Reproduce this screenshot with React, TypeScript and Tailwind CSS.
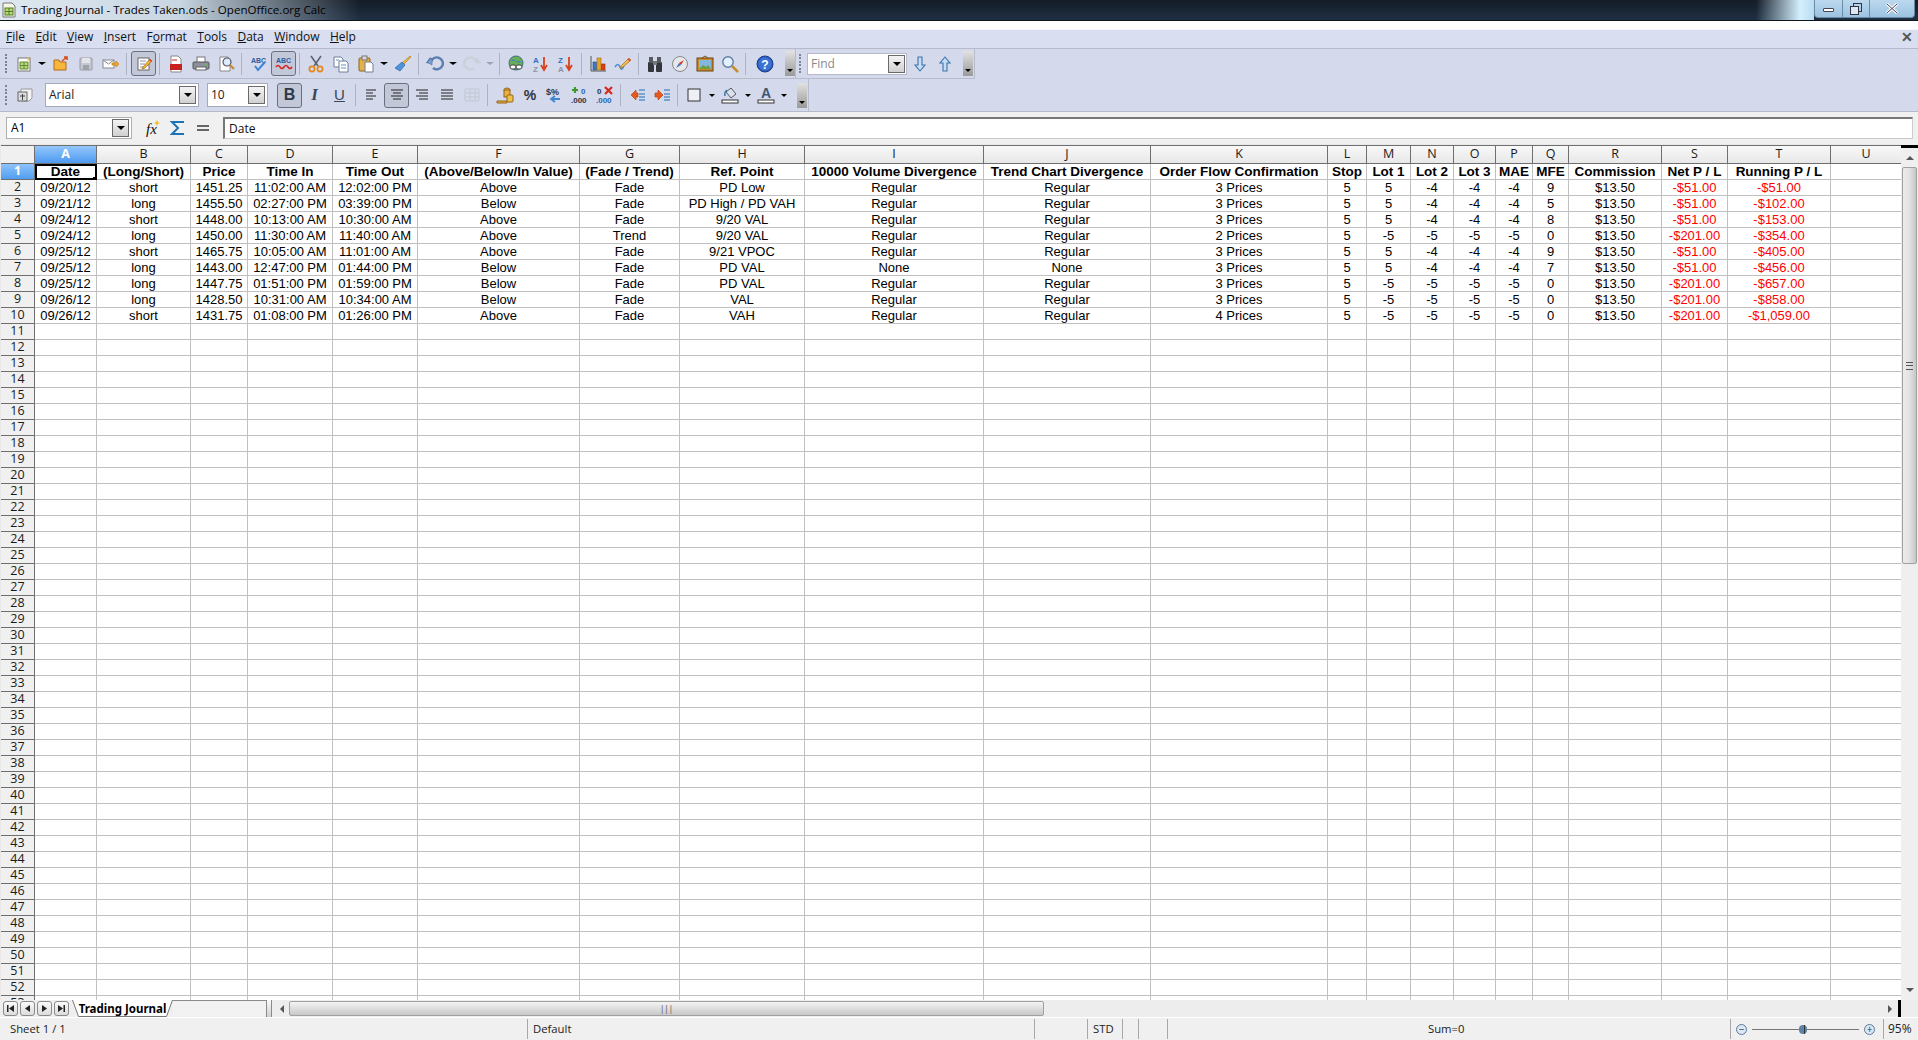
import React from "react";

const sans = "font-['Open_Sans','Noto_Sans',sans-serif]";

const columns = ["A", "B", "C", "D", "E", "F", "G", "H", "I", "J", "K", "L", "M", "N", "O", "P", "Q", "R", "S", "T", "U"];

const headers = ["Date", "(Long/Short)", "Price", "Time In", "Time Out", "(Above/Below/In Value)", "(Fade / Trend)", "Ref. Point", "10000 Volume Divergence", "Trend Chart Divergence", "Order Flow Confirmation", "Stop", "Lot 1", "Lot 2", "Lot 3", "MAE", "MFE", "Commission", "Net P / L", "Running P / L", ""];

const trades = [
  ["09/20/12", "short", "1451.25", "11:02:00 AM", "12:02:00 PM", "Above", "Fade", "PD Low", "Regular", "Regular", "3 Prices", "5", "5", "-4", "-4", "-4", "9", "$13.50", "-$51.00", "-$51.00", ""],
  ["09/21/12", "long", "1455.50", "02:27:00 PM", "03:39:00 PM", "Below", "Fade", "PD High / PD VAH", "Regular", "Regular", "3 Prices", "5", "5", "-4", "-4", "-4", "5", "$13.50", "-$51.00", "-$102.00", ""],
  ["09/24/12", "short", "1448.00", "10:13:00 AM", "10:30:00 AM", "Above", "Fade", "9/20 VAL", "Regular", "Regular", "3 Prices", "5", "5", "-4", "-4", "-4", "8", "$13.50", "-$51.00", "-$153.00", ""],
  ["09/24/12", "long", "1450.00", "11:30:00 AM", "11:40:00 AM", "Above", "Trend", "9/20 VAL", "Regular", "Regular", "2 Prices", "5", "-5", "-5", "-5", "-5", "0", "$13.50", "-$201.00", "-$354.00", ""],
  ["09/25/12", "short", "1465.75", "10:05:00 AM", "11:01:00 AM", "Above", "Fade", "9/21 VPOC", "Regular", "Regular", "3 Prices", "5", "5", "-4", "-4", "-4", "9", "$13.50", "-$51.00", "-$405.00", ""],
  ["09/25/12", "long", "1443.00", "12:47:00 PM", "01:44:00 PM", "Below", "Fade", "PD VAL", "None", "None", "3 Prices", "5", "5", "-4", "-4", "-4", "7", "$13.50", "-$51.00", "-$456.00", ""],
  ["09/25/12", "long", "1447.75", "01:51:00 PM", "01:59:00 PM", "Below", "Fade", "PD VAL", "Regular", "Regular", "3 Prices", "5", "-5", "-5", "-5", "-5", "0", "$13.50", "-$201.00", "-$657.00", ""],
  ["09/26/12", "long", "1428.50", "10:31:00 AM", "10:34:00 AM", "Below", "Fade", "VAL", "Regular", "Regular", "3 Prices", "5", "-5", "-5", "-5", "-5", "0", "$13.50", "-$201.00", "-$858.00", ""],
  ["09/26/12", "short", "1431.75", "01:08:00 PM", "01:26:00 PM", "Above", "Fade", "VAH", "Regular", "Regular", "4 Prices", "5", "-5", "-5", "-5", "-5", "0", "$13.50", "-$201.00", "-$1,059.00", ""],
];

const menus: [string, number][] = [["File", 0], ["Edit", 0], ["View", 0], ["Insert", 0], ["Format", 1], ["Tools", 0], ["Data", 0], ["Window", 0], ["Help", 0]];

const emptyRows = Array.from({ length: 43 }, (_, i) => i + 11);
const blankCells = columns.map(() => "");

function Sep() {
  return <span className="mx-[3px] h-[22px] w-px shrink-0 bg-[#aeb3c4]" />;
}

function Grip() {
  return (
    <span className="ml-[3px] mr-[2px] flex h-[22px] w-[3px] shrink-0 flex-col justify-between py-px">
      {[0, 1, 2, 3, 4, 5].map((i) => (
        <span key={i} className="h-[2px] w-[2px] bg-[#7d8296]" />
      ))}
    </span>
  );
}

function Btn({ children, active }: { children: React.ReactNode; active?: boolean }) {
  return (
    <span
      className={`flex h-[25px] w-[25px] shrink-0 items-center justify-center rounded-[3px] ${
        active ? "border border-[#6b7080] bg-[#c3c8d8]" : ""
      }`}
    >
      <svg width="18" height="18" viewBox="0 0 18 18">
        {children}
      </svg>
    </span>
  );
}

function Drop() {
  return (
    <span className="flex w-[12px] shrink-0 justify-center">
      <span className="h-0 w-0 border-x-[4px] border-t-[3px] border-x-transparent border-t-black" />
    </span>
  );
}

function SmallDrop() {
  return (
    <span className="flex w-[11px] shrink-0 justify-center">
      <span className="h-0 w-0 border-x-[3px] border-t-[3px] border-x-transparent border-t-black" />
    </span>
  );
}

function Overflow() {
  return (
    <span className="flex h-[25px] w-[10px] shrink-0 items-end justify-center bg-gradient-to-b from-[#e2e2e2] to-[#9a9a9a] pb-[4px]">
      <span className="h-0 w-0 border-x-[3px] border-t-[3px] border-x-transparent border-t-black" />
    </span>
  );
}

function ComboArrow() {
  return (
    <span className="flex h-[18px] w-[17px] items-center justify-center border border-[#6a6a6a] bg-gradient-to-b from-[#f4f4f4] to-[#d0d0d0]">
      <span className="h-0 w-0 border-x-[4px] border-t-[4px] border-x-transparent border-t-black" />
    </span>
  );
}

const align = ["M3 4h10M3 7h7M3 10h10M3 13h7", "M3 4h12M5 7h8M3 10h12M5 13h8", "M3 4h12M6 7h9M3 10h12M6 13h9", "M3 4h12M3 7h12M3 10h12M3 13h12"];

function Toolbar1() {
  return (
    <div className="flex h-[30px] w-[796px] shrink-0 items-center border-b border-r border-[#b7bccd] pl-[2px]">
      <Grip />
      <span className="w-px" />
      <Btn><rect x="3" y="3" width="12" height="13" fill="#fff" stroke="#777" /><path d="M5 7h8v7H5z" fill="#b8d67a" stroke="#5f8a2b" /><path d="M9 7v7M5 10.5h8" stroke="#5f8a2b" /><path d="M11 1l1 2 2-1-1 2 2 1-2 1" fill="#f2c230" /></Btn>
      <Drop />
      <Btn><path d="M2 5h5l1 2h6v8H2z" fill="#f6b73c" stroke="#b46a12" /><path d="M10 6l5-4M12 2h3v3" stroke="#d84b16" strokeWidth="1.6" fill="none" /></Btn>
      <Btn><rect x="3" y="3" width="12" height="12" rx="1" fill="#c5c8cf" stroke="#9a9ca4" /><rect x="5" y="3" width="8" height="5" fill="#e4e5ea" /><rect x="6" y="10" width="6" height="5" fill="#9fa2aa" /></Btn>
      <Btn><rect x="1" y="5" width="11" height="8" fill="#fff" stroke="#888" /><path d="M1 5l5.5 4L12 5" fill="none" stroke="#888" /><path d="M10 8h4V6l3 3-3 3v-2h-4z" fill="#efaa2a" stroke="#b67714" strokeWidth=".6" /></Btn>
      <Sep />
      <span className="w-px" />
      <Btn active><rect x="3" y="3" width="11" height="12" fill="#fff" stroke="#666" /><path d="M5 6h6M5 9h5M5 12h4" stroke="#8a8fa0" /><path d="M8 12l7-8 2 2-7 7-3 1z" fill="#f0b23a" stroke="#a5661a" strokeWidth=".7" /><path d="M14.5 4.5l2 2" stroke="#d8432a" strokeWidth="1.5" /></Btn>
      <Sep />
      <Btn><path d="M4 1h7l3 3v13H4z" fill="#fff" stroke="#888" /><rect x="3" y="9" width="12" height="6" fill="#c8201e" /><path d="M5 5h5" stroke="#c8201e" /></Btn>
      <Btn><rect x="5" y="2" width="8" height="6" fill="#fff" stroke="#777" /><rect x="1" y="7" width="16" height="7" rx="1" fill="#8c909a" stroke="#555" /><rect x="4" y="12" width="10" height="3" fill="#fff" stroke="#666" /><circle cx="14" cy="10" r=".9" fill="#6ec04a" /></Btn>
      <Btn><path d="M3 2h8l2 3v11H3z" fill="#fff" stroke="#888" /><circle cx="10" cy="7" r="4" fill="#dcecff" stroke="#556" strokeWidth="1.2" /><path d="M13 10l4 4" stroke="#c68a2c" strokeWidth="2.2" /></Btn>
      <Sep />
      <span className="w-px" />
      <Btn><text x="1" y="8" fontSize="7" fontWeight="700" fontFamily="Liberation Sans" fill="#2c5aa0">ABC</text><path d="M5 11l3 4 7-8" fill="none" stroke="#3d86d6" strokeWidth="2" /></Btn>
      <Btn active><text x="1" y="8" fontSize="7" fontWeight="700" fontFamily="Liberation Sans" fill="#2c5aa0">ABC</text><path d="M1 12q2-3 4 0t4 0 4 0 4 0" fill="none" stroke="#d32a2a" strokeWidth="1.6" /></Btn>
      <Sep />
      <Btn><path d="M4 1l7 10M14 1L7 11" stroke="#5c6470" strokeWidth="1.6" /><circle cx="5" cy="14" r="2.6" fill="none" stroke="#e4881c" strokeWidth="1.7" /><circle cx="13" cy="14" r="2.6" fill="none" stroke="#e4881c" strokeWidth="1.7" /></Btn>
      <Btn><path d="M2 2h7l2 2v8H2z" fill="#fff" stroke="#6a7f9a" /><path d="M7 6h7l2 2v9H7z" fill="#fff" stroke="#6a7f9a" /><path d="M9 10h5M9 13h5M4 5h3" stroke="#6a8fb8" /></Btn>
      <Btn><rect x="2" y="3" width="11" height="13" rx="1" fill="#e3b04a" stroke="#8e661c" /><rect x="5" y="1" width="5" height="4" fill="#d9d9d9" stroke="#777" /><path d="M8 7h6l2 2v8H8z" fill="#fff" stroke="#6a7f9a" /></Btn>
      <Drop />
      <span className="-ml-[6px] w-[6px]" />
      <Btn><path d="M16 1l1 1-7 7-2-1z" fill="#f1b73d" stroke="#a5741c" strokeWidth=".6" /><path d="M8 7l3 3-5 6-5-3z" fill="#4f93dc" stroke="#2e6aa8" strokeWidth=".7" /></Btn>
      <Sep />
      <Btn><path d="M5 3L2 7h3a6 6 0 1 1 2 6" fill="none" stroke="#5c7fb0" strokeWidth="2.4" /><path d="M1 7l5-4v7z" fill="#7fa2d0" stroke="#446a9d" strokeWidth=".6" /></Btn>
      <Drop />
      <Btn><path d="M13 3l3 4h-3a6 6 0 1 0-2 6" fill="none" stroke="#ccd0da" strokeWidth="2.4" /></Btn>
      <span className="flex w-[12px] shrink-0 justify-center">
        <span className="h-0 w-0 border-x-[4px] border-t-[3px] border-x-transparent border-t-[#a0a4b0]" />
      </span>
      <Sep />
      <Btn><circle cx="9" cy="8" r="7" fill="#6cae55" stroke="#3f6e8a" /><path d="M3 6q4-3 6 0t6 0" fill="#3f87c4" /><rect x="3" y="10" width="6" height="4" rx="2" fill="#fff" stroke="#444" /><rect x="9" y="10" width="6" height="4" rx="2" fill="#fff" stroke="#444" /></Btn>
      <Btn><text x="1" y="8" fontSize="8" fontWeight="700" fontFamily="Liberation Sans" fill="#2c73c8">A</text><text x="1" y="17" fontSize="8" fontWeight="700" fontFamily="Liberation Sans" fill="#8b93a3">Z</text><path d="M12 2v11M9 10l3 5 3-5" stroke="#d8431c" strokeWidth="1.8" fill="none" /></Btn>
      <Btn><text x="1" y="8" fontSize="8" fontWeight="700" fontFamily="Liberation Sans" fill="#2c73c8">Z</text><text x="1" y="17" fontSize="8" fontWeight="700" fontFamily="Liberation Sans" fill="#8b93a3">A</text><path d="M12 2v11M9 10l3 5 3-5" stroke="#d8431c" strokeWidth="1.8" fill="none" /></Btn>
      <Sep />
      <Btn><path d="M2 1v15h15" fill="none" stroke="#555" /><rect x="4" y="7" width="3.5" height="8" fill="#3b78c4" stroke="#224d88" strokeWidth=".6" /><rect x="8" y="3" width="4" height="12" fill="#e8a52e" stroke="#a06a12" strokeWidth=".6" /><rect x="12.5" y="9" width="3.5" height="6" fill="#d8431c" stroke="#94280c" strokeWidth=".6" /></Btn>
      <Btn><path d="M1 12q3-5 5 0t4-2" fill="none" stroke="#4c8ed6" strokeWidth="1.6" /><path d="M7 11l8-8 2 2-8 7-3 1z" fill="#f2bd4a" stroke="#a36c18" strokeWidth=".7" /><path d="M14 4l2 2" stroke="#d8432a" strokeWidth="1.6" /></Btn>
      <Sep />
      <Btn><rect x="2" y="7" width="6" height="10" rx="1" fill="#33373d" /><rect x="10" y="7" width="6" height="10" rx="1" fill="#33373d" /><rect x="3" y="2" width="4" height="6" fill="#555a62" /><rect x="11" y="2" width="4" height="6" fill="#555a62" /><rect x="7" y="6" width="4" height="4" fill="#777" /></Btn>
      <Btn><circle cx="9" cy="9" r="7.5" fill="#e8e8ea" stroke="#888" /><path d="M13 5l-3 5-2-2z" fill="#d8352a" /><path d="M5 13l3-5 2 2z" fill="#3e78c8" /></Btn>
      <Btn><path d="M6 3l3-2 3 2" fill="none" stroke="#7a5518" /><rect x="1" y="3" width="16" height="13" fill="#c98a2a" stroke="#6a4510" /><rect x="3" y="5" width="12" height="9" fill="#84b7de" /><path d="M3 14l4-4 3 2 2-2 3 4z" fill="#6d9e3f" /></Btn>
      <Btn><circle cx="7" cy="7" r="5.2" fill="#e2f0ff" stroke="#5e7fa6" strokeWidth="1.4" /><path d="M11 11l6 6" stroke="#c88f2e" strokeWidth="2.6" /></Btn>
      <Sep />
      <span className="w-[3px]" />
      <Btn><circle cx="9" cy="9" r="8" fill="#2f5fc0" stroke="#1d3c88" /><circle cx="9" cy="9" r="6.5" fill="#3c72d6" /><text x="9" y="13.5" textAnchor="middle" fontSize="12" fontWeight="700" fontFamily="Liberation Sans" fill="#fff">?</text></Btn>
      <span className="w-[8px]" />
      <Overflow />
    </div>
  );
}

function FindBar() {
  return (
    <div className="flex h-[30px] w-[179px] shrink-0 items-center border-b border-r border-[#b7bccd]">
      <Grip />
      <div className="ml-[3px] flex h-[22px] w-[100px] items-center justify-between border border-[#b6bac8] bg-white pl-[3px] pr-px">
        <span className={`${sans} text-[12px] text-[#8a8a8a]`}>Find</span>
        <ComboArrow />
      </div>
      <Btn><path d="M7 2h4v8h3l-5 6-5-6h3z" fill="#c4dcf4" stroke="#3e72ac" strokeWidth="1.1" /></Btn>
      <Btn><path d="M7 16h4V8h3L9 2 4 8h3z" fill="#c4dcf4" stroke="#3e72ac" strokeWidth="1.1" /></Btn>
      <span className="w-[6px]" />
      <Overflow />
    </div>
  );
}

function Toolbar2() {
  return (
    <div className="flex h-[32px] w-[809px] shrink-0 items-center border-r border-[#b7bccd] pl-[2px]">
      <Grip />
      <span className="w-[2px]" />
      <Btn><path d="M5 3h11v9l-3 3H5z" fill="#f4f4f4" stroke="#999" /><rect x="2" y="6" width="9" height="9" fill="#dcdcdc" stroke="#666" /><path d="M6.5 8v6M4 10h5" stroke="#444" /></Btn>
      <span className="w-[8px]" />
      <div className="flex h-[24px] w-[154px] items-center justify-between border border-[#a5a9b8] bg-white pl-[3px] pr-[2px]">
        <span className={`${sans} text-[12px] text-[#222]`}>Arial</span>
        <ComboArrow />
      </div>
      <span className="w-[8px]" />
      <div className="flex h-[24px] w-[61px] items-center justify-between border border-[#a5a9b8] bg-white pl-[3px] pr-[2px]">
        <span className={`${sans} text-[12px] text-[#222]`}>10</span>
        <ComboArrow />
      </div>
      <span className="w-[9px]" />
      <span className="flex h-[25px] w-[25px] shrink-0 items-center justify-center rounded-[3px] border border-[#6b7080] bg-[#c3c8d8] font-['Liberation_Sans',sans-serif] text-[16px] font-bold text-[#2c3a4c]">B</span>
      <span className="flex h-[25px] w-[25px] shrink-0 items-center justify-center font-['Liberation_Serif',serif] text-[17px] font-bold italic text-[#3b4656]">I</span>
      <span className="flex h-[25px] w-[25px] shrink-0 items-center justify-center font-['Liberation_Sans',sans-serif] text-[15px] text-[#3b4656] underline">U</span>
      <Sep />
      <Btn><path d={align[0]} stroke="#222" /></Btn>
      <Btn active><path d={align[1]} stroke="#222" /></Btn>
      <Btn><path d={align[2]} stroke="#222" /></Btn>
      <Btn><path d={align[3]} stroke="#222" /></Btn>
      <Btn><path d="M2 3h14v12H2zM2 7h14M2 11h14M7 3v12M12 3v12" fill="none" stroke="#c3c7d3" /></Btn>
      <Sep />
      <span className="w-px" />
      <Btn><ellipse cx="11" cy="4" rx="3" ry="2" fill="#eab23c" stroke="#96651a" /><rect x="8" y="4" width="6" height="7" fill="#eab23c" stroke="#96651a" /><rect x="11" y="9" width="6" height="7" rx="1" fill="#f0c048" stroke="#96651a" /><path d="M1 15h10v2H1z" fill="#eab23c" stroke="#96651a" /></Btn>
      <Btn><text x="9" y="14" textAnchor="middle" fontSize="14" fontWeight="700" fontFamily="Liberation Sans" fill="#30343c">%</text></Btn>
      <Btn><text x="0" y="9" fontSize="9" fontWeight="700" fontFamily="Liberation Sans" fill="#30343c">$%</text><path d="M14 13H6M9 10l-4 3 4 3" stroke="#3e86d0" strokeWidth="1.8" fill="none" /></Btn>
      <Btn><path d="M4 1v6M1 4h6" stroke="#3d9a2a" strokeWidth="2.2" /><text x="10" y="8" fontSize="8" fontWeight="700" fontFamily="Liberation Sans" fill="#2c66b4">0</text><text x="0" y="17" fontSize="8" fontWeight="700" fontFamily="Liberation Sans" fill="#30343c">.000</text></Btn>
      <Btn><path d="M9 1l7 7M16 1L9 8" stroke="#d8281c" strokeWidth="2.2" /><text x="1" y="8" fontSize="8" fontWeight="700" fontFamily="Liberation Sans" fill="#30343c">0</text><text x="0" y="17" fontSize="8" fontWeight="700" fontFamily="Liberation Sans" fill="#2c66b4">.000</text></Btn>
      <Sep />
      <Btn><path d="M8 4l-5 5 5 5V11h2V7H8z" fill="#e8581c" stroke="#b03a0c" strokeWidth=".6" /><path d="M11 4h6M11 8h6M11 11h6M11 14h6" stroke="#1f6fb4" strokeWidth="1.2" /></Btn>
      <Btn><path d="M5 4l5 5-5 5V11H2V7h3z" fill="#e8581c" stroke="#b03a0c" strokeWidth=".6" /><path d="M11 4h6M11 8h6M11 11h6M11 14h6" stroke="#1f6fb4" strokeWidth="1.2" /></Btn>
      <Sep />
      <Btn><rect x="3" y="3" width="12" height="12" fill="#eef0f6" stroke="#333" /></Btn>
      <SmallDrop />
      <Btn><path d="M5 6l5-4 5 6-5 4z" fill="#d9e2ea" stroke="#556" /><path d="M6 4q-3 2-2 6" fill="none" stroke="#3b78b8" strokeWidth="1.5" /><rect x="1" y="14" width="16" height="3" fill="#fff" stroke="#333" /></Btn>
      <SmallDrop />
      <Btn><text x="9" y="12" textAnchor="middle" fontSize="14" fontWeight="700" fontFamily="Liberation Sans" fill="#3f5872">A</text><rect x="1" y="14" width="16" height="3" fill="#fff" stroke="#333" /></Btn>
      <SmallDrop />
      <span className="w-[8px]" />
      <Overflow />
    </div>
  );
}

function Cell({ text, bold, red, selected }: { text: string; bold?: boolean; red?: boolean; selected?: boolean }) {
  return (
    <div
      className={`relative flex items-center justify-center overflow-visible whitespace-nowrap border-b border-r border-[#c0c0c0] bg-white leading-none ${
        bold ? "text-[13.5px] font-bold" : "text-[13px]"
      } ${red ? "text-[#ff0000]" : "text-black"}`}
    >
      {text}
      {selected && (
        <>
          <span className="absolute -bottom-[2px] left-0 -right-[2px] top-0 border-b-[3px] border-l-2 border-r-[3px] border-t-2 border-black" />
          <span className="absolute -bottom-[4px] -right-[4px] h-[6px] w-[7px] bg-black" />
        </>
      )}
    </div>
  );
}

function RowHead({ n, active }: { n: number; active?: boolean }) {
  return (
    <div
      className={`${sans} flex items-center justify-center border-b border-r border-[#6f6f6f] text-[12.5px] leading-none ${
        active ? "bg-gradient-to-b from-[#8fc3fb] to-[#4f9df0] font-bold text-white" : "bg-[#f0f0f0] text-[#1a1a1a]"
      }`}
    >
      {n}
    </div>
  );
}

function Sheet() {
  return (
    <div className="relative min-h-0 flex-1 overflow-hidden bg-[#e8e8e8] pl-px pt-px">
      <div className="grid grid-cols-[34px_62px_94px_57px_85px_85px_162px_100px_125px_179px_167px_177px_39px_44px_43px_42px_37px_36px_93px_66px_103px_71px] grid-rows-[19px] auto-rows-[16px] font-['Liberation_Sans','Arial',sans-serif]">
        <div className="border-b border-r border-t border-[#6f6f6f] bg-[#f0f0f0]" />
        {columns.map((c, i) => (
          <div
            key={c}
            className={`${sans} flex items-center justify-center border-b border-r border-t border-[#6f6f6f] text-[12.5px] leading-none ${
              i === 0 ? "bg-gradient-to-b from-[#93c6fc] to-[#4c9af0] font-bold text-white" : "bg-gradient-to-b from-[#f8f8f8] to-[#e8e8e8] text-[#1a1a1a]"
            }`}
          >
            {c}
          </div>
        ))}
        <RowHead n={1} active />
        {headers.map((h, i) => (
          <Cell key={i} text={h} bold selected={i === 0} />
        ))}
        {trades.map((row, r) => (
          <React.Fragment key={r}>
            <RowHead n={r + 2} />
            {row.map((v, i) => (
              <Cell key={i} text={v} red={i === 18 || i === 19} />
            ))}
          </React.Fragment>
        ))}
        {emptyRows.map((n) => (
          <React.Fragment key={n}>
            <RowHead n={n} />
            {blankCells.map((v, i) => (
              <Cell key={i} text={v} />
            ))}
          </React.Fragment>
        ))}
      </div>
    </div>
  );
}

function NavBtn({ path }: { path: string }) {
  return (
    <span className="flex h-[15px] w-[15px] shrink-0 items-center justify-center rounded-[3px] border border-[#8a8a8a] bg-gradient-to-b from-[#fafafa] to-[#dcdcdc]">
      <svg width="9" height="9" viewBox="0 0 9 9">
        <path d={path} fill="#222" />
      </svg>
    </span>
  );
}

function TabBar() {
  return (
    <div className="flex h-[17px] shrink-0 items-center bg-[#efefef] pl-[3px]">
      <div className="flex gap-[2px]">
        <NavBtn path="M1 1h1.5v7H1zM8 1v7L3 4.5z" />
        <NavBtn path="M7 1v7L2 4.5z" />
        <NavBtn path="M2 1v7l5-3.5z" />
        <NavBtn path="M8 1H6.5v7H8zM1 1v7l5-3.5z" />
      </div>
      <div className="ml-[3px] flex h-[17px] w-[194px] items-start">
        <span className="relative flex h-[17px] w-[101px] shrink-0 items-center justify-center">
          <svg className="absolute inset-0" width="101" height="17" viewBox="0 0 101 17">
            <path d="M.5 0l6 16.5h88l6-16.5" fill="#fff" stroke="#777" />
          </svg>
          <span className="relative font-['Noto_Sans',sans-serif] text-[11.5px] font-bold leading-none text-black">Trading Journal</span>
        </span>
        <span className="h-[16px] flex-1 border-t border-[#8a8a8a] bg-[#f2f2f2]" />
      </div>
      <span className="h-[17px] w-[6px] shrink-0 border-x border-[#8a8a8a] bg-gradient-to-b from-[#fafafa] to-[#d0d0d0]" />
      <div className="flex h-[17px] flex-1 items-center bg-[#ededed]">
        <span className="ml-[4px] flex w-[11px] justify-center">
          <span className="h-0 w-0 border-y-[4px] border-r-[4px] border-y-transparent border-r-[#555]" />
        </span>
        <span className="ml-[2px] flex h-[15px] w-[755px] items-center justify-center rounded-[2px] border border-[#a0a0a0] bg-gradient-to-b from-[#f4f4f4] to-[#c8c8c8] text-[8px] leading-none text-[#555]">
          |||
        </span>
        <span className="flex-1" />
        <span className="h-0 w-0 border-y-[4px] border-l-[4px] border-y-transparent border-l-[#555]" />
        <span className="ml-[6px] h-[17px] w-[3px] bg-black" />
        <span className="w-[17px]" />
      </div>
    </div>
  );
}

function VScroll() {
  return (
    <div className="flex w-[17px] shrink-0 flex-col items-center bg-[#efefef]">
      <span className="h-px w-full shrink-0" />
      <span className="h-[3px] w-full shrink-0 bg-black" />
      <span className="flex h-[19px] w-full shrink-0 items-center justify-center">
        <span className="h-0 w-0 border-x-[4px] border-b-[4px] border-x-transparent border-b-[#555]" />
      </span>
      <span className="flex h-[397px] w-[15px] shrink-0 items-center justify-center rounded-[2px] border border-[#a0a0a0] bg-gradient-to-r from-[#ececec] via-[#e2e2e2] to-[#c6c6c6]">
        <span className="flex h-[8px] w-[7px] flex-col justify-between">
          <span className="h-px w-full bg-[#555]" />
          <span className="h-px w-full bg-[#555]" />
          <span className="h-px w-full bg-[#555]" />
        </span>
      </span>
      <span className="flex-1" />
      <span className="flex h-[20px] w-full shrink-0 items-center justify-center">
        <span className="h-0 w-0 border-x-[4px] border-t-[4px] border-x-transparent border-t-[#555]" />
      </span>
    </div>
  );
}

function StatusBar() {
  const line = "h-[20px] w-px shrink-0 bg-[#a8a8a8]";
  return (
    <div className={`${sans} flex h-[23px] shrink-0 items-center border-t border-white bg-[#f0f0f0] text-[11.3px] leading-none text-[#222]`}>
      <span className="w-[527px] pl-[10px]">Sheet 1 / 1</span>
      <span className={line} />
      <span className="w-[506px] pl-[5px]">Default</span>
      <span className={line} />
      <span className="w-[52px]" />
      <span className={line} />
      <span className="w-[34px] pl-[5px]">STD</span>
      <span className={line} />
      <span className="w-[15px]" />
      <span className={line} />
      <span className="w-[28px]" />
      <span className={line} />
      <span className="w-[562px] pl-[260px]">Sum=0</span>
      <span className={line} />
      <span className="ml-[5px] flex h-[11px] w-[11px] items-center justify-center rounded-full border border-[#5d7a98] bg-[#dbe7f3] text-[10px] leading-none text-[#1d3f66]">−</span>
      <span className="relative mx-[5px] flex h-[11px] w-[107px] items-center">
        <span className="h-px w-full bg-[#777]" />
        <span className="absolute left-[47px] h-[9px] w-[8px] rounded-full bg-[#5f84a8]" />
        <span className="absolute left-[52px] h-[9px] w-px bg-[#333]" />
      </span>
      <span className="flex h-[11px] w-[11px] items-center justify-center rounded-full border border-[#5d7a98] bg-[#dbe7f3] text-[10px] leading-none text-[#1d3f66]">+</span>
      <span className="w-[8px]" />
      <span className={line} />
      <span className="pl-[4px] text-[12px]">95%</span>
    </div>
  );
}

export default function App() {
  return (
    <div className="flex h-[1040px] w-[1918px] flex-col overflow-hidden bg-[#f0f0f0]">
      {/* window title */}
      <div className="flex h-[21px] shrink-0 items-center justify-between border-b border-[#0f141a] bg-gradient-to-b from-[#141c26] to-[#1f3044]">
        <div className="flex h-full w-[360px] items-center bg-gradient-to-r from-[#dfe8f0] via-[#c8d6e2] to-transparent pl-[2px]">
          <svg width="14" height="16" viewBox="0 0 14 16">
            <path d="M1 1h9l3 3v11H1z" fill="#f6f6e8" stroke="#777" />
            <rect x="3" y="6" width="8" height="7" fill="#b8d67a" stroke="#4f7e20" />
            <path d="M7 6v7M3 9.5h8" stroke="#4f7e20" />
          </svg>
          <span className={`${sans} ml-[5px] whitespace-nowrap text-[11.6px] leading-none text-black`}>
            Trading Journal - Trades Taken.ods - OpenOffice.org Calc
          </span>
        </div>
        <div className="flex h-full items-start">
          <span className="h-full w-[44px] bg-gradient-to-r from-transparent to-[#d4effd]" />
          <span className="h-full w-[14px] bg-gradient-to-r from-[#d4effd] to-[#b9dcf3]" />
          <div className="mr-[3px] flex h-[18px] w-[101px] overflow-hidden rounded-b-[4px] border-x border-b border-[#6e8ba6] bg-gradient-to-b from-[#bcd8ee] to-[#9cc3e2]">
            <span className="flex w-[28px] items-center justify-center border-r border-[#6e8ba6]">
              <span className="mt-[3px] h-[4px] w-[11px] rounded-[1px] border border-[#445] bg-white" />
            </span>
            <span className="flex w-[27px] items-center justify-center border-r border-[#6e8ba6]">
              <svg width="12" height="12" viewBox="0 0 12 12">
                <rect x="3.5" y=".5" width="8" height="8" fill="none" stroke="#334" />
                <rect x=".5" y="3.5" width="8" height="8" fill="#dce8f2" stroke="#334" />
              </svg>
            </span>
            <span className="flex flex-1 items-center justify-center">
              <svg width="12" height="11" viewBox="0 0 12 11">
                <path d="M1 1l10 9M11 1L1 10" stroke="#fff" strokeWidth="3" />
                <path d="M1 1l10 9M11 1L1 10" stroke="#445" strokeWidth="1" />
              </svg>
            </span>
          </div>
        </div>
      </div>

      {/* menu */}
      <div className={`${sans} flex h-[28px] shrink-0 items-center justify-between border-b border-[#b5bacb] bg-gradient-to-b from-white from-[30%] to-[#d9dff0] to-[35%] text-[12px] leading-none text-[#111]`}>
        <div className="flex gap-[10.4px] pl-[6px] pt-[4px]">
          {menus.map(([m, u]) => (
            <span key={m}>
              {m.slice(0, u)}
              <span className="underline">{m[u]}</span>
              {m.slice(u + 1)}
            </span>
          ))}
        </div>
        <span className="pr-[5px] pt-[4px] text-[14px] font-bold text-[#555]">✕</span>
      </div>

      {/* toolbars */}
      <div className="shrink-0 bg-[#d4d9ec]">
        <div className="flex">
          <Toolbar1 />
          <FindBar />
        </div>
        <Toolbar2 />
      </div>

      {/* formula bar */}
      <div className={`${sans} flex h-[33px] shrink-0 items-center border-t border-[#b5bacb] bg-[#f0f0f0] pl-[6px] text-[12px] leading-none`}>
        <div className="flex h-[22px] w-[126px] items-center justify-between border border-[#b0b0b0] bg-white pl-[4px] pr-[2px]">
          <span>A1</span>
          <ComboArrow />
        </div>
        <span className="w-[8px]" />
        <Btn><text x="2" y="15" fontSize="15" fontStyle="italic" fontFamily="Liberation Serif" fill="#111">fx</text><path d="M13 1l1 2 2 1-2 1-1 2-1-2-2-1 2-1z" fill="#f0c030" /></Btn>
        <Btn><path d="M15 3H3l6 6-6 6h12" fill="none" stroke="#1c74b8" strokeWidth="2" /></Btn>
        <Btn><path d="M3 7h12M3 11h12" stroke="#666" strokeWidth="2" /></Btn>
        <span className="w-[8px]" />
        <div className="flex h-[22px] flex-1 items-center border-b border-l-2 border-r border-t-2 border-b-[#ccc] border-l-[#777] border-r-[#ccc] border-t-[#777] bg-white pl-[4px] text-[#111]">
          Date
        </div>
        <span className="w-[5px]" />
      </div>

      {/* sheet */}
      <div className="flex min-h-0 flex-1">
        <Sheet />
        <VScroll />
      </div>
      <TabBar />
      <StatusBar />
    </div>
  );
}
